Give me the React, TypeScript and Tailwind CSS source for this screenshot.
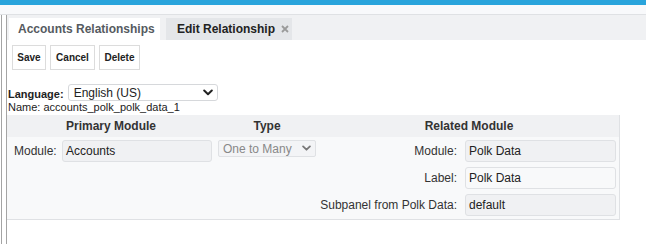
import React from "react";

const Chevron = ({ color = "#222", w = 10 }: { color?: string; w?: number }) => (
  <svg width={w} height={w * 0.7} viewBox="0 0 10 7" fill="none">
    <path d="M1.2 1.5 L5 5.2 L8.8 1.5" stroke={color} strokeWidth="2" strokeLinecap="round" strokeLinejoin="round" />
  </svg>
);

export default function App() {
  const font = { fontFamily: '"Liberation Sans", Arial, sans-serif' };
  return (
    <div className="w-[646px] h-[244px] bg-white overflow-hidden text-[#333]" style={font}>
      <div className="h-[5px] bg-[#29a4dc]" />
      <div className="h-[10px] bg-[#f8f9fb] border-b border-[#dfe1e4]" />
      <div className="flex h-[229px]">
        <div className="w-[7px] flex shrink-0">
          <div className="ml-[1px] w-[1px] bg-[#a4a4a4]" />
          <div className="ml-[4px] w-[1px] bg-[#a4a4a4]" />
        </div>
        <div className="flex-1 flex flex-col">
          {/* tabs */}
          <div className="h-[25px] bg-[#f0f1f3] flex items-end pl-[2px] gap-[6px]">
            <div className="h-[22px] w-[151px] bg-white flex items-center pl-[9px] text-[12px] font-bold text-[#555a60]">
              Accounts Relationships
            </div>
            <div className="h-[22px] w-[126px] bg-[#e4e6e9] flex items-center pl-[11px] gap-[6px] text-[12px] font-bold text-[#222]">
              <span>Edit Relationship</span>
              <svg width="8" height="8" viewBox="0 0 8 8">
                <path d="M1 1 L7 7 M7 1 L1 7" stroke="#9a9a9a" strokeWidth="1.8" />
              </svg>
            </div>
          </div>
          {/* buttons */}
          <div className="flex gap-[4px] pl-[5px] mt-[5px]">
            {["Save", "Cancel", "Delete"].map((b, i) => (
              <div
                key={b}
                className={`h-[25px] flex items-center justify-center border border-[#dcdcdc] bg-white text-[10px] font-bold text-[#222] ${
                  i === 0 ? "w-[34px]" : i === 1 ? "w-[45px]" : "w-[41px]"
                }`}
              >
                {b}
              </div>
            ))}
          </div>
          {/* language */}
          <div className="flex items-end h-[17px] mt-[14px] pl-[1px]">
            <span className="text-[11px] leading-[13px] font-bold text-[#222]">Language:</span>
            <div className="ml-[4px] w-[150px] h-[17px] border border-[#d6d8db] rounded-[3px] bg-white flex items-center justify-between pl-[5px] pr-[4px]">
              <span className="text-[12px] text-[#222]">English (US)</span>
              <Chevron />
            </div>
          </div>
          <div className="pl-[1px] text-[11px] leading-[12px] text-[#222]">Name: accounts_polk_polk_data_1</div>
          {/* table */}
          <div className="mt-[2px] w-[613px] border-r border-b border-[#dfe1e4] bg-[#f8f9fa] pb-[3px]">
            <div className="grid grid-cols-[52px_156px_104px_142px_158px] h-[22px] bg-[#f0f1f3] items-center text-[12px] font-bold text-[#333]">
              <div className="col-span-2 text-center">Primary Module</div>
              <div className="text-center">Type</div>
              <div className="col-span-2 text-center">Related Module</div>
            </div>
            <div className="grid grid-cols-[52px_156px_104px_142px_158px] gap-y-[5px] pt-[3px] text-[12px] items-center">
              <div className="pl-[7px]">Module:</div>
              <div className="pl-[3px]">
                <div className="w-[150px] h-[22px] border border-[#dfe1e4] rounded-[3px] bg-[#f0f1f3] flex items-center pl-[3px] text-[#222]">
                  Accounts
                </div>
              </div>
              <div className="pl-[3px] self-start">
                <div className="w-[98px] h-[17px] border border-[#dfe1e4] rounded-[2px] bg-[#f3f4f6] flex items-center justify-between pl-[4px] pr-[4px] text-[#888]">
                  <span>One to Many</span>
                  <Chevron color="#777" w={9} />
                </div>
              </div>
              <div className="text-right pr-[4px]">Module:</div>
              <div className="pl-[4px]">
                <div className="w-[151px] h-[22px] border border-[#dfe1e4] rounded-[3px] bg-[#f0f1f3] flex items-center pl-[3px] text-[#222]">
                  Polk Data
                </div>
              </div>

              <div className="col-span-3" />
              <div className="text-right pr-[4px]">Label:</div>
              <div className="pl-[4px]">
                <div className="w-[151px] h-[22px] border border-[#dfe1e4] rounded-[3px] bg-[#f8f9fa] flex items-center pl-[3px] text-[#222]">
                  Polk Data
                </div>
              </div>

              <div className="col-span-3" />
              <div className="text-right pr-[4px] whitespace-nowrap">Subpanel from Polk Data:</div>
              <div className="pl-[4px]">
                <div className="w-[151px] h-[22px] border border-[#dfe1e4] rounded-[3px] bg-[#f0f1f3] flex items-center pl-[3px] text-[#222]">
                  default
                </div>
              </div>
            </div>
          </div>
        </div>
      </div>
    </div>
  );
}
